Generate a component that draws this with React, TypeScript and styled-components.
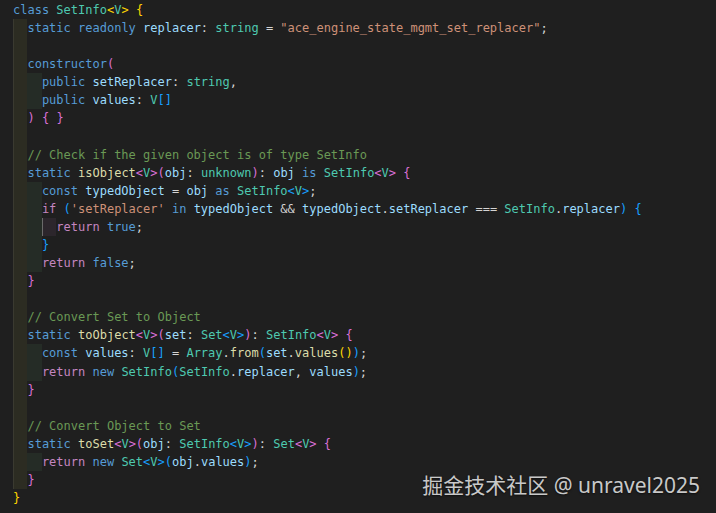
import React from "react";
import styled, { createGlobalStyle } from "styled-components";

const GlobalStyle = createGlobalStyle`
  html, body { margin: 0; padding: 0; background: #1f1f1f; }
`;

type Kind = "kw" | "ctl" | "ty" | "va" | "fn" | "st" | "cm" | "p" | "b1" | "b2" | "b3" | "b4";

const palette: Record<Kind, string> = {
  kw: "#569cd6",
  ctl: "#c586c0",
  ty: "#4ec9b0",
  va: "#9cdcfe",
  fn: "#dcdcaa",
  st: "#ce9178",
  cm: "#6a9955",
  p: "#d4d4d4",
  b1: "#ffd700",
  b2: "#da70d6",
  b3: "#179fff",
  b4: "#ffd700",
};

const rainbow = ["transparent", "#2c2c22", "#252c26", "#2c262c"];

const Editor = styled.div`
  position: relative;
  width: 716px;
  height: 513px;
  box-sizing: border-box;
  overflow: hidden;
  background: #1f1f1f;
  padding: 1px 0 0 13px;
  font-family: "DejaVu Sans Mono", "Liberation Mono", monospace;
  font-size: 12px;
  line-height: 18.08px;
  white-space: pre;
  color: #d4d4d4;
`;

const Line = styled.div`
  display: flex;
  height: 18.08px;
`;

const Indent = styled.span<{ $level: number; $active?: boolean }>`
  display: inline-block;
  width: 2ch;
  height: 100%;
  flex: none;
  background: ${(p) => rainbow[p.$level]};
  box-shadow: inset 1px 0 0
    ${(p) => (p.$active ? "#6a6a6a" : p.$level === 1 ? "#3a3a30" : "transparent")};
`;

const Tok = styled.span<{ $k: Kind }>`
  color: ${(p) => palette[p.$k]};
`;

const Watermark = styled.div`
  position: absolute;
  right: 16px;
  bottom: 15px;
  font-family: "Noto Sans", "Noto Sans CJK SC", sans-serif;
  font-size: 21px;
  line-height: 25px;
  color: rgba(235, 235, 235, 0.85);
  text-shadow: 0 1px 2px rgba(0, 0, 0, 0.6);
  white-space: pre;
`;

type T = [Kind, string];
type L = { lv: number; t: T[]; active?: boolean };

const k = (s: string): T => ["kw", s];
const c = (s: string): T => ["ctl", s];
const y = (s: string): T => ["ty", s];
const v = (s: string): T => ["va", s];
const f = (s: string): T => ["fn", s];
const p = (s: string): T => ["p", s];

const lines: L[] = [
  { lv: 0, t: [k("class"), p(" "), y("SetInfo"), ["b1", "<"], y("V"), ["b1", ">"], p(" "), ["b1", "{"]] },
  {
    lv: 1,
    t: [k("static"), p(" "), k("readonly"), p(" "), v("replacer"), p(": "), y("string"), p(" = "), ["st", '"ace_engine_state_mgmt_set_replacer"'], p(";")],
  },
  { lv: 1, t: [] },
  { lv: 1, t: [k("constructor"), ["b2", "("]] },
  { lv: 2, t: [k("public"), p(" "), v("setReplacer"), p(": "), y("string"), p(",")] },
  { lv: 2, t: [k("public"), p(" "), v("values"), p(": "), y("V"), ["b3", "[]"]] },
  { lv: 1, t: [["b2", ")"], p(" "), ["b2", "{"], p(" "), ["b2", "}"]] },
  { lv: 1, t: [] },
  { lv: 1, t: [["cm", "// Check if the given object is of type SetInfo"]] },
  {
    lv: 1,
    t: [k("static"), p(" "), f("isObject"), ["b2", "<"], y("V"), ["b2", ">"], ["b2", "("], v("obj"), p(": "), y("unknown"), ["b2", ")"], p(": "), v("obj"), p(" "), k("is"), p(" "), y("SetInfo"), ["b2", "<"], y("V"), ["b2", ">"], p(" "), ["b2", "{"]],
  },
  {
    lv: 2,
    t: [k("const"), p(" "), v("typedObject"), p(" = "), v("obj"), p(" "), k("as"), p(" "), y("SetInfo"), ["b3", "<"], y("V"), ["b3", ">"], p(";")],
  },
  {
    lv: 2,
    t: [c("if"), p(" "), ["b3", "("], ["st", "'setReplacer'"], p(" "), k("in"), p(" "), v("typedObject"), p(" && "), v("typedObject"), p("."), v("setReplacer"), p(" === "), y("SetInfo"), p("."), v("replacer"), ["b3", ")"], p(" "), ["b3", "{"]],
  },
  { lv: 3, active: true, t: [c("return"), p(" "), k("true"), p(";")] },
  { lv: 2, t: [["b3", "}"]] },
  { lv: 2, t: [c("return"), p(" "), k("false"), p(";")] },
  { lv: 1, t: [["b2", "}"]] },
  { lv: 1, t: [] },
  { lv: 1, t: [["cm", "// Convert Set to Object"]] },
  {
    lv: 1,
    t: [k("static"), p(" "), f("toObject"), ["b2", "<"], y("V"), ["b2", ">"], ["b2", "("], v("set"), p(": "), y("Set"), ["b3", "<"], y("V"), ["b3", ">"], ["b2", ")"], p(": "), y("SetInfo"), ["b2", "<"], y("V"), ["b2", ">"], p(" "), ["b2", "{"]],
  },
  {
    lv: 2,
    t: [k("const"), p(" "), v("values"), p(": "), y("V"), ["b3", "[]"], p(" = "), y("Array"), p("."), f("from"), ["b3", "("], v("set"), p("."), f("values"), ["b4", "()"], ["b3", ")"], p(";")],
  },
  {
    lv: 2,
    t: [c("return"), p(" "), k("new"), p(" "), y("SetInfo"), ["b3", "("], y("SetInfo"), p("."), v("replacer"), p(", "), v("values"), ["b3", ")"], p(";")],
  },
  { lv: 1, t: [["b2", "}"]] },
  { lv: 1, t: [] },
  { lv: 1, t: [["cm", "// Convert Object to Set"]] },
  {
    lv: 1,
    t: [k("static"), p(" "), f("toSet"), ["b2", "<"], y("V"), ["b2", ">"], ["b2", "("], v("obj"), p(": "), y("SetInfo"), ["b3", "<"], y("V"), ["b3", ">"], ["b2", ")"], p(": "), y("Set"), ["b2", "<"], y("V"), ["b2", ">"], p(" "), ["b2", "{"]],
  },
  {
    lv: 2,
    t: [c("return"), p(" "), k("new"), p(" "), y("Set"), ["b3", "<"], y("V"), ["b3", ">"], ["b3", "("], v("obj"), p("."), v("values"), ["b3", ")"], p(";")],
  },
  { lv: 1, t: [["b2", "}"]] },
  { lv: 0, t: [["b1", "}"]] },
];

export default function App() {
  return (
    <>
      <GlobalStyle />
      <Editor>
        {lines.map((ln, i) => (
          <Line key={i}>
            {Array.from({ length: ln.lv }, (_, j) => (
              <Indent key={j} $level={j + 1} $active={ln.active && j + 1 === ln.lv} />
            ))}
            {ln.t.map(([kind, text], j) => (
              <Tok key={j} $k={kind}>
                {text}
              </Tok>
            ))}
          </Line>
        ))}
        <Watermark>掘金技术社区 @ unravel2025</Watermark>
      </Editor>
    </>
  );
}
